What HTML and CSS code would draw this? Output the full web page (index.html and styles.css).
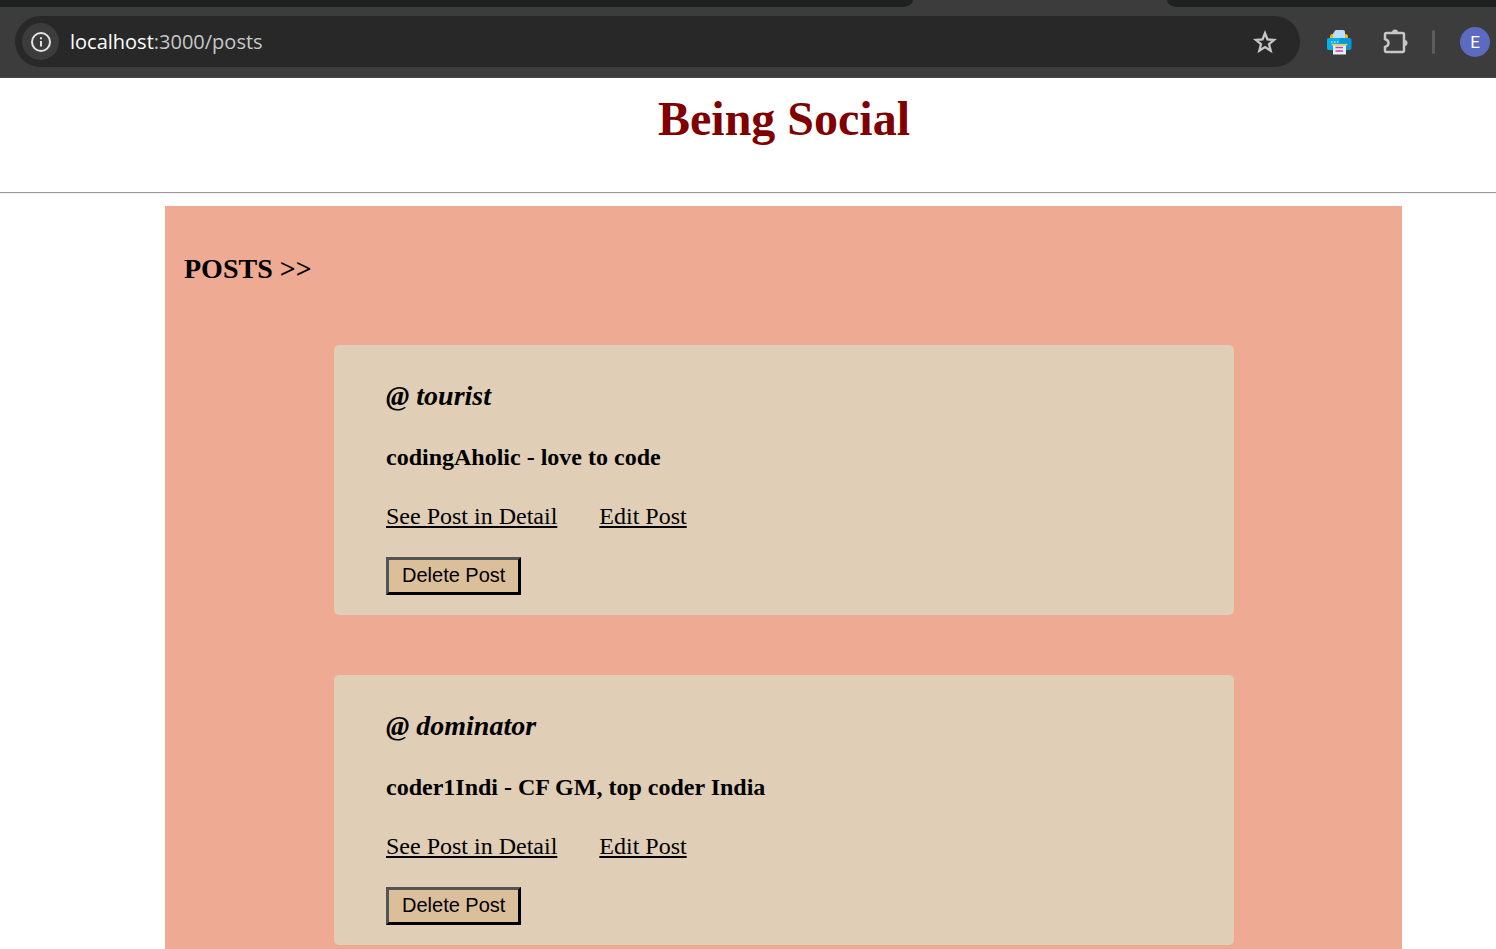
FILE: index.html
```html
<!DOCTYPE html>
<html lang="en">
<head>
<meta charset="utf-8">
<title>Being Social</title>
<link rel="stylesheet" href="styles.css">
</head>
<body>
<header class="browser">
  <div class="tabs">
    <div class="tab tab-left"></div>
    <div class="tab tab-right"></div>
  </div>
  <div class="toolbar">
    <div class="address">
      <button class="icon-button site-info" aria-label="Site information">
        <svg width="22" height="22" viewBox="0 0 22 22" fill="none" stroke="#e3e3e3" stroke-width="2"><circle cx="11" cy="11" r="9"/><path d="M11 10v5.500M11 6.300v2"/></svg>
      </button>
      <div class="url"><span class="host">localhost</span>:3000/posts</div>
      <button class="icon-button" aria-label="Bookmark">
        <svg width="24" height="24" viewBox="0 0 24 24" fill="none" stroke="#c7c7c7" stroke-width="2.300"><path d="M12 3.200l2.500 6.200 6.600.5-5.100 4.300 1.700 6.500-5.700-3.600-5.700 3.600 1.700-6.500-5.100-4.300 6.600-.5z"/></svg>
      </button>
    </div>
    <div class="actions">
      <button class="icon-button" aria-label="Print extension">
        <svg width="26" height="26" viewBox="0 0 26 26">
          <path d="M4 10V7.500Q4 5 6.500 5h13Q22 5 22 7.500V10z" fill="#ffb300"/>
          <path d="M7 10V4.500Q9 4 9.500 1H17q2 0 2 2v7z" fill="#bbdefb"/>
          <path d="M7 4.500Q9 4 9.500 1z" fill="#e3f2fd"/>
          <path d="M1 11q0-2 2-2h20.500q2 0 2 2v8q0 2-2 2H3q-2 0-2-2z" fill="#0397dc"/>
          <path d="M1 11q0-2 2-2h12l-8 12H3q-2 0-2-2z" fill="#00b0ef"/>
          <path d="M5 13h1.500M8 13h1.500M11 13h1.500" stroke="#b3e5fc" stroke-width="1.500"/>
          <path d="M5.500 15.600h16" stroke="#ffca28" stroke-width="1.500"/>
          <path d="M7 16.300h13V25.500H7z" fill="#e1f0fb"/>
          <path d="M9.500 18.500h7.500M9.500 22h7.500" stroke="#d53aa0" stroke-width="1.600"/>
        </svg>
      </button>
      <button class="icon-button" aria-label="Extensions">
        <svg width="28" height="28" viewBox="0 0 28 28"><path d="M5.500 5h16q1.500 0 1.500 1.500v16q0 1.500-1.500 1.500h-16Q4 24 4 22.500V19q3.500-1.200 3.500-4T4 11V6.500Q4 5 5.500 5z" fill="none" stroke="#c7c7c7" stroke-width="2.500"/><path d="M11 4.500a3 3 0 0 1 6 0zM23.500 12a3 3 0 0 1 0 6z" fill="#c7c7c7"/></svg>
      </button>
      <span class="divider"></span>
      <button class="avatar" aria-label="Profile">E</button>
    </div>
  </div>
</header>
<main class="page">
  <h1 class="title">Being Social</h1>
  <hr class="rule">
  <section class="posts">
    <h3 class="posts-title">POSTS &gt;&gt;</h3>
    <div class="list">
      <article class="post">
        <h3 class="user">@ tourist</h3>
        <h4 class="content">codingAholic - love to code</h4>
        <div class="links"><a href="#tourist">See Post in Detail</a><a href="#edit-tourist">Edit Post</a></div>
        <button class="delete">Delete Post</button>
      </article>
      <article class="post">
        <h3 class="user">@ dominator</h3>
        <h4 class="content">coder1Indi - CF GM, top coder India</h4>
        <div class="links"><a href="#dominator">See Post in Detail</a><a href="#edit-dominator">Edit Post</a></div>
        <button class="delete">Delete Post</button>
      </article>
    </div>
  </section>
</main>
</body>
</html>
```
FILE: styles.css
```css
* { box-sizing: border-box; }
body {
  margin: 0;
  height: 100vh;
  display: flex;
  flex-direction: column;
  overflow: hidden;
  background: #fff;
  color: #000;
  font-family: "Liberation Serif", "Times New Roman", serif;
  font-size: 24px;
  line-height: 28px;
}
h1, h3, h4 { margin: 0; }

.browser {
  flex: none;
  background: #3c3c3c;
  border-bottom: 1px solid #484848;
  font-family: "Open Sans", "Noto Sans", sans-serif;
}
.tabs { display: flex; justify-content: space-between; height: 7px; }
.tab { background: #1f2120; }
.tab-left { width: 61%; border-bottom-right-radius: 12px 8px; }
.tab-right { width: 22%; border-bottom-left-radius: 12px 8px; }
.toolbar { display: flex; align-items: center; padding: 9px 6px 10px 15px; }
.address {
  flex: 1;
  display: flex;
  align-items: center;
  padding: 7px 23px 7px 7px;
  border-radius: 26px;
  background: #282828;
}
.icon-button {
  display: flex;
  align-items: center;
  justify-content: center;
  padding: 0;
  border: 0;
  background: none;
}
.site-info { width: 37px; height: 37px; border-radius: 50%; background: #3c3c3c; }
.url { flex: 1; margin-left: 11px; font-size: 20px; color: #c7c7c7; }
.host { color: #fff; }
.actions { display: flex; align-items: center; margin-left: 26px; }
.actions .icon-button + .icon-button { margin-left: 29px; }
.divider { width: 3px; height: 24px; margin: 0 25px 0 23px; border-radius: 2px; background: #5c5c5c; }
.avatar {
  width: 30px;
  height: 30px;
  padding: 0;
  border: 0;
  border-radius: 50%;
  background: #5c6bc0;
  color: #fff;
  font-family: Roboto, sans-serif;
  font-size: 17px;
}

.page { flex: 1; min-height: 0; display: flex; flex-direction: column; overflow: hidden; }
.title {
  flex: none;
  padding: 14px 0 46px 72px;
  color: #800000;
  font-size: 48px;
  line-height: 54px;
  text-align: center;
}
.rule {
  flex: none;
  width: 100%;
  height: 2px;
  margin: 0 0 12px;
  border: 0;
  border-top: 1px solid #9a9a9a;
  background: #eee;
}
.posts { flex: 1 0 auto; margin: 0 94px 0 165px; padding: 47px 18px 0 19px; background: #efaa94; }
.posts-title { font-size: 28px; line-height: 32px; }
.list { display: flex; flex-direction: column; align-items: center; gap: 60px; margin-top: 60px; }
.post {
  width: 75%;
  display: flex;
  flex-direction: column;
  align-items: flex-start;
  padding: 35px 52px 20px;
  border-radius: 5px;
  background: #e0ceb6;
}
.user { font-size: 28px; line-height: 32px; font-style: italic; }
.content { margin-top: 31px; font-size: 24px; }
.links { display: flex; gap: 42px; margin-top: 31px; }
.links a { color: #000; }
.delete {
  height: 38px;
  margin-top: 27px;
  padding: 0 13px 2px;
  border: 3px outset #000;
  background: #dbbf9b;
  color: #000;
  font-family: "Liberation Sans", Arial, sans-serif;
  font-size: 20px;
}
```
